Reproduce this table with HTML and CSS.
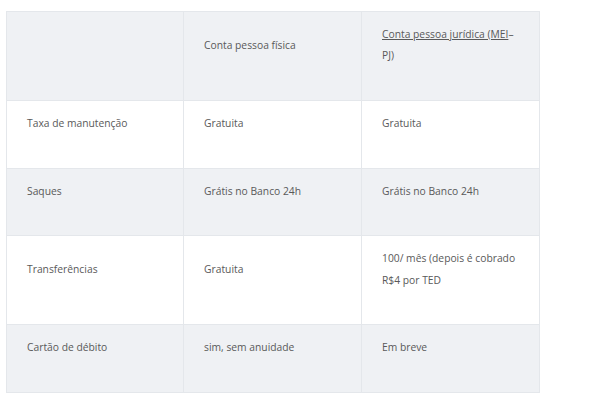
FILE: index.html
```html
<!DOCTYPE html>
<html lang="pt">
<head>
<meta charset="utf-8">
<link rel="stylesheet" href="styles.css">
</head>
<body>
<table class="cmp">
  <colgroup><col class="c1"><col class="c2"><col class="c3"></colgroup>
  <tr class="alt">
    <td></td>
    <td>Conta pessoa física</td>
    <td><a class="lnk" href="#">Conta pessoa jurídica (MEI</a>–PJ)</td>
  </tr>
  <tr>
    <td>Taxa de manutenção</td>
    <td>Gratuita</td>
    <td>Gratuita</td>
  </tr>
  <tr class="alt">
    <td>Saques</td>
    <td>Grátis no Banco 24h</td>
    <td>Grátis no Banco 24h</td>
  </tr>
  <tr>
    <td>Transferências</td>
    <td>Gratuita</td>
    <td>100/ mês (depois é cobrado R$4 por TED</td>
  </tr>
  <tr class="alt">
    <td>Cartão de débito</td>
    <td>sim, sem anuidade</td>
    <td>Em breve</td>
  </tr>
</table>
</body>
</html>
```
FILE: styles.css
```css
html, body {
  margin: 0;
  background: #ffffff;
}
.cmp {
  margin: 11px 0 0 6px;
  width: 533px;
  table-layout: fixed;
  border-collapse: collapse;
  font-family: "Open Sans", "DejaVu Sans", sans-serif;
  font-size: 10.3px;
  line-height: 21.4px;
  color: #595959;
}
.c1 { width: 177px; }
.c2 { width: 178px; }
.c3 { width: 178px; }
.cmp td {
  border: 1px solid #e4e7eb;
  padding: 12px 20px 33.2px 20px;
  vertical-align: middle;
  text-align: left;
}
.cmp tr.alt td {
  background: #eff1f4;
}
.lnk {
  color: #595959;
  text-decoration: underline;
}
```
